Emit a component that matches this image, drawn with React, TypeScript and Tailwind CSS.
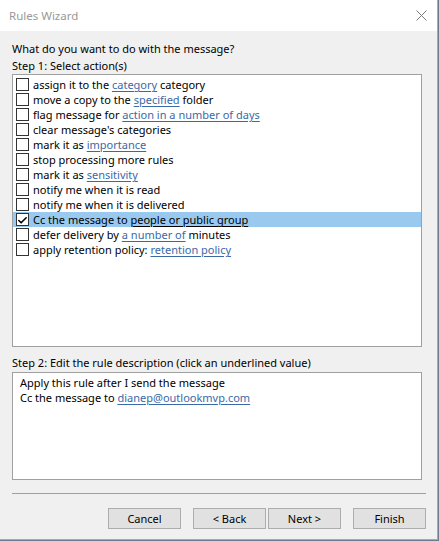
import { Check } from "lucide-react";

type Part = { t: string; link?: boolean };

const ACTIONS: { parts: Part[]; checked?: boolean }[] = [
  { parts: [{ t: "assign it to the " }, { t: "category", link: true }, { t: " category" }] },
  { parts: [{ t: "move a copy to the " }, { t: "specified", link: true }, { t: " folder" }] },
  { parts: [{ t: "flag message for " }, { t: "action in a number of days", link: true }] },
  { parts: [{ t: "clear message's categories" }] },
  { parts: [{ t: "mark it as " }, { t: "importance", link: true }] },
  { parts: [{ t: "stop processing more rules" }] },
  { parts: [{ t: "mark it as " }, { t: "sensitivity", link: true }] },
  { parts: [{ t: "notify me when it is read" }] },
  { parts: [{ t: "notify me when it is delivered" }] },
  { parts: [{ t: "Cc the message to " }, { t: "people or public group", link: true }], checked: true },
  { parts: [{ t: "defer delivery by " }, { t: "a number of", link: true }, { t: " minutes" }] },
  { parts: [{ t: "apply retention policy: " }, { t: "retention policy", link: true }] },
];

function ActionRow({ parts, checked }: { parts: Part[]; checked?: boolean }) {
  return (
    <div className={`flex h-[15px] items-center pl-[3px] ${checked ? "bg-[#99c9ef]" : ""}`}>
      <div className="flex h-[13px] w-[13px] shrink-0 items-center justify-center border border-[#333] bg-white">
        {checked && <Check size={11} strokeWidth={3.5} className="mt-[1px] text-black" />}
      </div>
      <span className="ml-[4px] whitespace-nowrap">
        {parts.map((p, i) =>
          p.link ? (
            <span
              key={i}
              className={`underline underline-offset-2 ${checked ? "text-black" : "text-[#3a69a8]"}`}
            >
              {p.t}
            </span>
          ) : (
            <span key={i}>{p.t}</span>
          )
        )}
      </span>
    </div>
  );
}

function WizButton({ label }: { label: string }) {
  return (
    <button className="h-[21px] w-[73px] border border-[#adadad] bg-[#e1e1e1] text-[11px] text-black">
      {label}
    </button>
  );
}

export default function App() {
  return (
    <div
      className="h-[541px] w-[439px] bg-[#6b7a8f] text-[11px] leading-[15px] text-black"
      style={{ fontFamily: "'Noto Sans', 'Open Sans', sans-serif" }}
    >
      <div className="flex h-[540px] w-[438px] flex-col border-r border-b border-[#aaaaaa] bg-[#f0f0f0]">
        {/* Title bar */}
        <div className="flex h-[31px] shrink-0 items-center justify-between bg-white pl-[9px] pr-[10px]">
          <span className="text-[11.5px] text-[#999999]">Rules Wizard</span>
          <svg width="11" height="11" viewBox="0 0 11 11" className="text-[#7a7a7a]">
            <path d="M0.5 0.5 L10.5 10.5 M10.5 0.5 L0.5 10.5" stroke="currentColor" strokeWidth="1" />
          </svg>
        </div>

        <div className="flex flex-1 flex-col pl-[12px] pr-[11px]">
          <div className="mt-[10px]">What do you want to do with the message?</div>
          <div className="mt-[2px]">Step 1: Select action(s)</div>

          <div className="mt-[1px] mr-[4px] h-[273px] border border-[#a0a0a0] bg-white pt-[2px]">
            {ACTIONS.map((a, i) => (
              <ActionRow key={i} parts={a.parts} checked={a.checked} />
            ))}
          </div>

          <div className="mt-[8px]">Step 2: Edit the rule description (click an underlined value)</div>
          <div className="mt-[2px] mr-[4px] h-[108px] border border-[#a0a0a0] bg-white pl-[7px] pt-[2px]">
            <div>Apply this rule after I send the message</div>
            <div>
              Cc the message to{" "}
              <span className="text-[#3a69a8] underline underline-offset-2">dianep@outlookmvp.com</span>
            </div>
          </div>

          <div className="mt-[13px] h-px bg-[#a0a0a0]" />

          <div className="mt-[14px] flex justify-end">
            <WizButton label="Cancel" />
            <div className="ml-[12px] flex gap-[2px]">
              <WizButton label="< Back" />
              <WizButton label="Next >" />
            </div>
            <div className="ml-[12px]">
              <WizButton label="Finish" />
            </div>
          </div>
        </div>
      </div>
    </div>
  );
}
